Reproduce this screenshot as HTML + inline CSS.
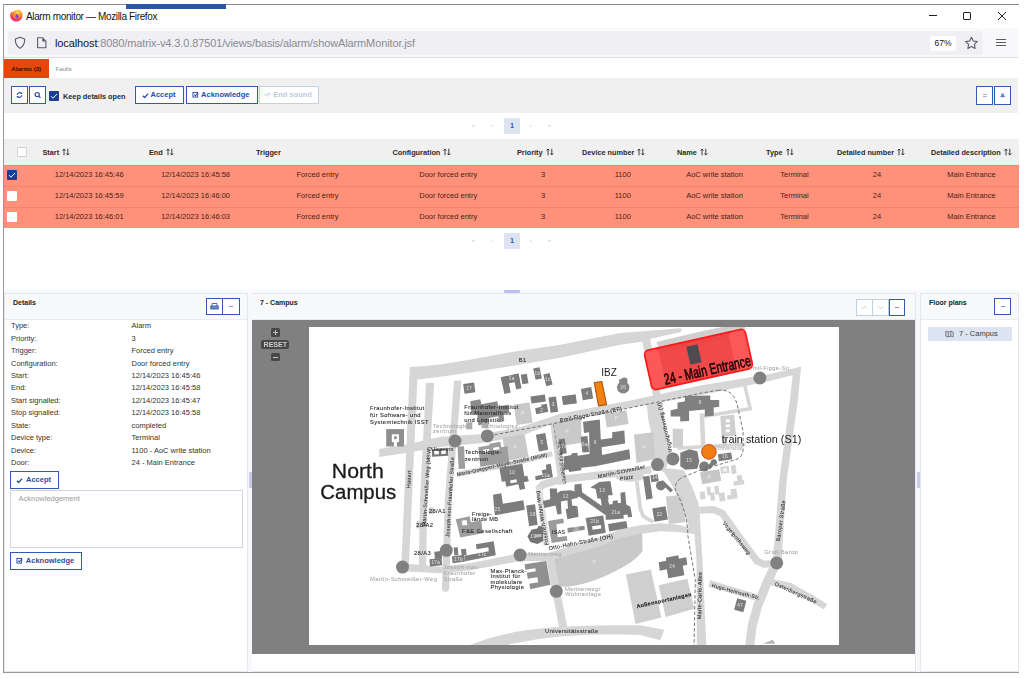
<!DOCTYPE html>
<html><head><meta charset="utf-8"><title>Alarm monitor</title>
<style>
*{box-sizing:border-box;margin:0;padding:0}
html,body{width:1024px;height:679px;overflow:hidden;background:#fff;font-family:"Liberation Sans",sans-serif;}
.abs{position:absolute}
#win{position:absolute;left:3px;top:4px;width:1016px;height:669px;border-top:1px solid #8a8a8a;border-left:1px solid #9a9a9a;border-bottom:1px solid #9a9a9a;background:#fff}
#title{position:absolute;left:26px;top:11px;font-size:10px;color:#15141a;letter-spacing:-0.36px;white-space:nowrap}
#bluebar{position:absolute;left:126px;top:4px;width:100px;height:5px;background:#2b56a8}
#nav{position:absolute;left:4px;top:28px;width:1014px;height:30px;background:#f9f9fb;border-bottom:1px solid #dcdce0}
#urlf{position:absolute;left:8px;top:31px;width:975px;height:24px;background:#f0f0f4;border-radius:4px}
#url{position:absolute;left:55px;top:37px;font-size:11px;color:#8a8a92;white-space:nowrap;letter-spacing:-0.12px}
#url b{font-weight:normal;color:#15141a}
#zoom{position:absolute;left:930px;top:36px;width:26px;height:15px;background:#fff;border-radius:2px;font-size:8.500px;color:#15141a;text-align:center;line-height:15px}
.tab1{position:absolute;left:4px;top:59px;width:44.500px;height:19.700px;background:#e8450a;border-bottom:1px solid #c93a08;color:#33100a;font-size:6.100px;font-weight:bold;text-align:center;line-height:20.500px}
.tab2{position:absolute;left:55.500px;top:59px;height:20px;color:#8a8a8a;font-size:6px;line-height:20.500px}
#tb{position:absolute;left:4px;top:78px;width:1014px;height:35px;background:#f0f0f0}
.btn{position:absolute;border:1px solid #2f5bb0;background:#fff;color:#2a4d9b;font-weight:bold;font-size:7.5px;white-space:nowrap;text-align:center}
.t{position:absolute;white-space:nowrap}

.pg{position:absolute;left:504px;width:16px;height:16px;background:#dce3f1;color:#2a4d9b;font-size:6.5px;font-weight:bold;text-align:center;line-height:16px}
.pa{position:absolute;font-size:6px;color:#d8d8d8;width:10px;text-align:center;font-weight:bold}
#th{position:absolute;left:4px;top:139px;width:1015px;height:26px;background:#f0f0f0}
.row{position:absolute;left:4px;width:1015px;height:21.300px;background:#ff917a;border-top:1px solid #f5836c}
.h{position:absolute;top:148px;font-size:7.300px;font-weight:bold;color:#2a2a2a;white-space:nowrap}
.c{position:absolute;font-size:7.500px;color:#4a1f18;white-space:nowrap;transform:translateX(-50%);line-height:10px}
.cb{position:absolute;width:10px;height:10px;background:#fff;border-radius:1px}

.panel{position:absolute;border:1px solid #e4e7ef;background:#fff}
.ph{position:absolute;left:0;top:0;right:0;height:26px;background:#f8f9fb;border-bottom:1px solid #e9ebf1}
.pt{position:absolute;font-size:7px;font-weight:bold;color:#222;white-space:nowrap}
.d{position:absolute;font-size:7.500px;color:#333;white-space:nowrap;line-height:10px}
</style></head><body>
<div id="win"></div>
<div id="bluebar"></div>
<div id="title">Alarm monitor — Mozilla Firefox</div>
<div id="nav"></div><div id="urlf"></div>
<div id="url"><b>localhost</b>:8080/matrix-v4.3.0.87501/views/basis/alarm/showAlarmMonitor.jsf</div>
<div id="zoom">67%</div>
<div class="tab1">Alarms (3)</div><div class="tab2">Faults</div>
<div id="tb"></div>

<div class="btn" style="left:11px;top:86px;width:17px;height:18px"><svg width="15" height="16" viewBox="0 0 15 16" style="position:absolute;left:0;top:0"><path d="M5.300 7.700a2.300 2.300 0 0 1 4-1.300M9.700 8.300a2.300 2.300 0 0 1-4 1.300" fill="none" stroke="#2a4d9b" stroke-width="1.200"/><path d="M10.200 5v2h-2zM4.800 11v-2h2z" fill="#2a4d9b"/></svg></div>
<div class="btn" style="left:29px;top:86px;width:17px;height:18px"><svg width="15" height="16" viewBox="0 0 15 16" style="position:absolute;left:0;top:0"><circle cx="7.2" cy="7.6" r="2.1" fill="none" stroke="#2a4d9b" stroke-width="1.2"/><path d="M8.7 9.1l1.7 1.7" stroke="#2a4d9b" stroke-width="1.3"/></svg></div>
<div class="abs" style="left:49px;top:91px;width:10px;height:10px;background:#1a3e98;border-radius:1px"><svg width="10" height="10" viewBox="0 0 10 10" style="position:absolute;left:0;top:0"><path d="M2 5.2l2 2l4-4.2" fill="none" stroke="#fff" stroke-width="1"/></svg></div>
<div class="t" style="left:63px;top:92px;font-size:7.3px;font-weight:bold;color:#2a2a2a">Keep details open</div>
<div class="btn" style="left:135px;top:86px;width:49px;height:18px;line-height:16px;padding-left:7px"><svg width="7" height="7" viewBox="0 0 8 8" style="position:absolute;left:6px;top:4.500px"><path d="M1 4.2l2 2l4-4.4" fill="none" stroke="#2a4d9b" stroke-width="1.5"/></svg>Accept</div>
<div class="btn" style="left:186px;top:86px;width:71.500px;height:18px;line-height:16px;padding-left:7px"><svg width="7.500" height="7.500" viewBox="0 0 8 8" style="position:absolute;left:4.500px;top:4px"><rect x="1" y="1.5" width="5" height="5" fill="none" stroke="#2a4d9b" stroke-width="1"/><path d="M2.3 3.8l1.3 1.3l3-3.4" fill="none" stroke="#2a4d9b" stroke-width="1.1"/></svg>Acknowledge</div>
<div class="btn" style="left:259px;top:86px;width:60px;height:18px;line-height:16px;padding-left:7px;border-color:#c5d0e6;color:#c0cae0"><span style="position:absolute;left:4px;top:0;font-size:4.500px">◁×</span>End sound</div>
<div class="btn" style="left:976px;top:86px;width:17px;height:19px"><div class="abs" style="left:6px;top:7px;width:4px;height:1px;background:#9fb3dc"></div><div class="abs" style="left:6px;top:9px;width:4px;height:1px;background:#9fb3dc"></div></div>
<div class="btn" style="left:994px;top:86px;width:17px;height:19px"><svg width="15" height="17" viewBox="0 0 15 17" style="position:absolute;left:0;top:0"><path d="M6 9.3v-1.5a1.6 1.6 0 0 1 3.2 0v1.5z" fill="#6f8fd0"/><path d="M5.4 9.6h4.4" stroke="#2a4d9b" stroke-width="0.8"/></svg></div>

<svg class="abs" style="left:9px;top:9px" width="15" height="14" viewBox="0 0 15 14"><defs><radialGradient id="fx" cx="0.6" cy="0.25" r="0.85"><stop offset="0" stop-color="#ffe14a"/><stop offset="0.35" stop-color="#ff9a1f"/><stop offset="0.7" stop-color="#ff3d4f"/><stop offset="1" stop-color="#e31587"/></radialGradient></defs><path d="M7.3 1.2C8.6.6 9.6 1 10.5.4c.3 1 1.4 1.5 2.2 2.9c.9 1.6 1 3.600.4 5.100c-.9 2.400-3.200 4.100-5.800 4.100c-3.400 0-6.100-2.700-6.100-6c0-1.600.6-3.100 1.500-4c.1.500.3.900.6 1.200c.9-1.700 2.200-2.200 4-2.500z" fill="url(#fx)"/><circle cx="7" cy="7.200" r="2.500" fill="#7b3fe0"/><path d="M5 5.500c1.200-.8 2.800-.3 3.300.6c-1.400-.3-2.300.6-2 1.600c.3.800 1.200 1 2 .6c-.6 1-2.200 1.200-3.200.3c-.9-.8-.9-2.200-.1-3.100z" fill="#ff9a1f"/></svg>
<svg class="abs" style="left:13px;top:36px" width="14" height="14" viewBox="0 0 14 14"><path d="M7 1.300l4.700 1.700c.1 4.200-1.300 7.300-4.700 9.400C3.600 10.300 2.200 7.200 2.300 3z" fill="none" stroke="#5b5b66" stroke-width="1.100" stroke-linejoin="round"/></svg>
<svg class="abs" style="left:36px;top:36px" width="12" height="14" viewBox="0 0 12 14"><path d="M1.600 1.800h5l3.300 3.300v6.700h-8.300z" fill="none" stroke="#5b5b66" stroke-width="1.100" stroke-linejoin="round"/><path d="M6.300 1.800v3.600h3.600z" fill="#5b5b66"/></svg>
<div class="abs" style="left:929px;top:15px;width:8px;height:1px;background:#222"></div>
<div class="abs" style="left:963px;top:12px;width:8px;height:8px;border:1px solid #222;border-radius:1px"></div>
<svg class="abs" style="left:997px;top:11px" width="10" height="10" viewBox="0 0 10 10"><path d="M1 1l8 8M9 1l-8 8" stroke="#222" stroke-width="1"/></svg>
<svg class="abs" style="left:964px;top:36px" width="15" height="14" viewBox="0 0 15 14"><path d="M7.500 1.300l1.800 3.700l4 .6l-2.900 2.800l.7 4l-3.600-1.900l-3.600 1.900l.7-4l-2.900-2.800l4-.6z" fill="none" stroke="#5b5b66" stroke-width="1.100" stroke-linejoin="round"/></svg>
<div class="abs" style="left:996px;top:39px;width:10px;height:1px;background:#5b5b66"></div>
<div class="abs" style="left:996px;top:42px;width:10px;height:1px;background:#5b5b66"></div>
<div class="abs" style="left:996px;top:45px;width:10px;height:1px;background:#5b5b66"></div>
<!--TOOLBAR-->
<div class="pg" style="top:118px">1</div><div class="pa" style="left:468.5px;top:122px">«</div><div class="pa" style="left:487.3px;top:122px">‹</div><div class="pa" style="left:525.5px;top:122px">›</div><div class="pa" style="left:544.3px;top:122px">»</div><div class="pg" style="top:233px">1</div><div class="pa" style="left:468.5px;top:237px">«</div><div class="pa" style="left:487.3px;top:237px">‹</div><div class="pa" style="left:525.5px;top:237px">›</div><div class="pa" style="left:544.3px;top:237px">»</div><div id="th"></div><div class="cb" style="left:17px;top:147px;border:1px solid #d4d4d4"></div>
<div class="h" style="left:42.5px">Start<svg width="8" height="8" viewBox="0 0 8 8" style="margin-left:3px;vertical-align:-1px"><path d="M2 7.300V1M.6 2.500L2 1l1.400 1.500M5.800.7v6.300M4.400 5.500l1.400 1.500l1.400-1.500" fill="none" stroke="#2a2a2a" stroke-width="0.900"/></svg></div><div class="h" style="left:149px">End<svg width="8" height="8" viewBox="0 0 8 8" style="margin-left:3px;vertical-align:-1px"><path d="M2 7.300V1M.6 2.500L2 1l1.400 1.500M5.800.7v6.300M4.400 5.500l1.400 1.500l1.400-1.500" fill="none" stroke="#2a2a2a" stroke-width="0.900"/></svg></div><div class="h" style="left:256px">Trigger</div><div class="h" style="left:392.5px">Configuration<svg width="8" height="8" viewBox="0 0 8 8" style="margin-left:3px;vertical-align:-1px"><path d="M2 7.300V1M.6 2.500L2 1l1.400 1.500M5.800.7v6.300M4.400 5.500l1.400 1.500l1.400-1.500" fill="none" stroke="#2a2a2a" stroke-width="0.900"/></svg></div><div class="h" style="left:517px">Priority<svg width="8" height="8" viewBox="0 0 8 8" style="margin-left:3px;vertical-align:-1px"><path d="M2 7.300V1M.6 2.500L2 1l1.400 1.500M5.800.7v6.300M4.400 5.500l1.400 1.500l1.400-1.500" fill="none" stroke="#2a2a2a" stroke-width="0.900"/></svg></div><div class="h" style="left:582px">Device number<svg width="8" height="8" viewBox="0 0 8 8" style="margin-left:3px;vertical-align:-1px"><path d="M2 7.300V1M.6 2.500L2 1l1.400 1.500M5.800.7v6.300M4.400 5.500l1.400 1.500l1.400-1.500" fill="none" stroke="#2a2a2a" stroke-width="0.900"/></svg></div><div class="h" style="left:677px">Name<svg width="8" height="8" viewBox="0 0 8 8" style="margin-left:3px;vertical-align:-1px"><path d="M2 7.300V1M.6 2.500L2 1l1.400 1.500M5.800.7v6.300M4.400 5.500l1.400 1.500l1.400-1.500" fill="none" stroke="#2a2a2a" stroke-width="0.900"/></svg></div><div class="h" style="left:766px">Type<svg width="8" height="8" viewBox="0 0 8 8" style="margin-left:3px;vertical-align:-1px"><path d="M2 7.300V1M.6 2.500L2 1l1.400 1.500M5.800.7v6.300M4.400 5.500l1.400 1.500l1.400-1.500" fill="none" stroke="#2a2a2a" stroke-width="0.900"/></svg></div><div class="h" style="left:837px">Detailed number<svg width="8" height="8" viewBox="0 0 8 8" style="margin-left:3px;vertical-align:-1px"><path d="M2 7.300V1M.6 2.500L2 1l1.400 1.500M5.800.7v6.300M4.400 5.500l1.400 1.500l1.400-1.500" fill="none" stroke="#2a2a2a" stroke-width="0.900"/></svg></div><div class="h" style="left:931px">Detailed description<svg width="8" height="8" viewBox="0 0 8 8" style="margin-left:3px;vertical-align:-1px"><path d="M2 7.300V1M.6 2.500L2 1l1.400 1.500M5.800.7v6.300M4.400 5.500l1.400 1.500l1.400-1.500" fill="none" stroke="#2a2a2a" stroke-width="0.900"/></svg></div>
<div class="row" style="top:164.5px"></div><div class="cb" style="left:7px;top:170.0px;background:#1a3e98"><svg width="10" height="10" viewBox="0 0 10 10" style="position:absolute;left:0;top:0"><path d="M2 5.200l2 2l4-4.200" fill="none" stroke="#fff" stroke-width="1"/></svg></div><div class="c" style="left:89.2px;top:170.0px">12/14/2023 16:45:46</div><div class="c" style="left:195.6px;top:170.0px">12/14/2023 16:45:58</div><div class="c" style="left:317.5px;top:170.0px">Forced entry</div><div class="c" style="left:448.2px;top:170.0px">Door forced entry</div><div class="c" style="left:543px;top:170.0px">3</div><div class="c" style="left:622.8px;top:170.0px">1100</div><div class="c" style="left:714.5px;top:170.0px">AoC write station</div><div class="c" style="left:794.5px;top:170.0px">Terminal</div><div class="c" style="left:877px;top:170.0px">24</div><div class="c" style="left:971.5px;top:170.0px">Main Entrance</div>
<div class="row" style="top:185.6px"></div><div class="cb" style="left:7px;top:191.1px"></div><div class="c" style="left:89.2px;top:191.1px">12/14/2023 16:45:59</div><div class="c" style="left:195.6px;top:191.1px">12/14/2023 16:46:00</div><div class="c" style="left:317.5px;top:191.1px">Forced entry</div><div class="c" style="left:448.2px;top:191.1px">Door forced entry</div><div class="c" style="left:543px;top:191.1px">3</div><div class="c" style="left:622.8px;top:191.1px">1100</div><div class="c" style="left:714.5px;top:191.1px">AoC write station</div><div class="c" style="left:794.5px;top:191.1px">Terminal</div><div class="c" style="left:877px;top:191.1px">24</div><div class="c" style="left:971.5px;top:191.1px">Main Entrance</div>
<div class="row" style="top:206.7px"></div><div class="cb" style="left:7px;top:212.2px"></div><div class="c" style="left:89.2px;top:212.2px">12/14/2023 16:46:01</div><div class="c" style="left:195.6px;top:212.2px">12/14/2023 16:46:03</div><div class="c" style="left:317.5px;top:212.2px">Forced entry</div><div class="c" style="left:448.2px;top:212.2px">Door forced entry</div><div class="c" style="left:543px;top:212.2px">3</div><div class="c" style="left:622.8px;top:212.2px">1100</div><div class="c" style="left:714.5px;top:212.2px">AoC write station</div><div class="c" style="left:794.5px;top:212.2px">Terminal</div><div class="c" style="left:877px;top:212.2px">24</div><div class="c" style="left:971.5px;top:212.2px">Main Entrance</div>
<!--TABLE-->

<div class="panel" style="left:4px;top:293px;width:244px;height:379px"><div class="ph"></div></div>
<div class="panel" style="left:251px;top:293px;width:665px;height:379px"><div class="ph"></div></div>
<div class="panel" style="left:920px;top:293px;width:99px;height:379px"><div class="ph"></div></div>
<div class="pt" style="left:13px;top:299px">Details</div>
<div class="pt" style="left:260px;top:299px">7 - Campus</div>
<div class="pt" style="left:929px;top:299px">Floor plans</div>
<div class="btn" style="left:206px;top:298px;width:17px;height:17px"><svg width="15" height="15" viewBox="0 0 15 15" style="position:absolute;left:0;top:0"><path d="M5 7V4.500h5V7" fill="#fff" stroke="#2a4d9b" stroke-width="0.800"/><rect x="3.800" y="7" width="7.400" height="3" fill="#6f8fd0" stroke="#2a4d9b" stroke-width="0.800"/></svg></div>
<div class="btn" style="left:222px;top:298px;width:18px;height:17px"><div class="abs" style="left:6px;top:7px;width:4px;height:1px;background:#7d95cc"></div></div>
<div class="btn" style="left:856px;top:299px;width:17px;height:17px;border-color:#c3cde6"><svg width="15" height="15" viewBox="0 0 15 15" style="position:absolute;left:0;top:0"><path d="M5 8.800l2.500-2.500l2.500 2.500" fill="none" stroke="#c3cde6" stroke-width="1"/></svg></div>
<div class="btn" style="left:872px;top:299px;width:17px;height:17px;border-color:#c3cde6"><svg width="15" height="15" viewBox="0 0 15 15" style="position:absolute;left:0;top:0"><path d="M5 6.300l2.500 2.500l2.500-2.500" fill="none" stroke="#c3cde6" stroke-width="1"/></svg></div>
<div class="btn" style="left:889px;top:299px;width:16px;height:17px"><div class="abs" style="left:5px;top:7px;width:4px;height:1px;background:#7d95cc"></div></div>
<div class="btn" style="left:994px;top:298px;width:17px;height:17px"><div class="abs" style="left:6px;top:7px;width:4px;height:1px;background:#7d95cc"></div></div>
<div class="abs" style="left:928px;top:327px;width:84px;height:14px;background:#dce3f1"></div>
<svg class="abs" style="left:945px;top:330px" width="9" height="8" viewBox="0 0 9 8"><path d="M.8 1.300l2.400.8l2.600-.8l2.400.8v4.800l-2.400-.8l-2.600.8l-2.400-.8zM3.200 2.100v4.800M5.800 1.300v4.800" fill="none" stroke="#555" stroke-width="0.700"/></svg>
<div class="d" style="left:959px;top:329px;color:#444">7 - Campus</div>
<div class="d" style="left:11px;top:321.2px">Type:</div><div class="d" style="left:131.5px;top:321.2px">Alarm</div>
<div class="d" style="left:11px;top:333.6px">Priority:</div><div class="d" style="left:131.5px;top:333.6px">3</div>
<div class="d" style="left:11px;top:346.1px">Trigger:</div><div class="d" style="left:131.5px;top:346.1px">Forced entry</div>
<div class="d" style="left:11px;top:358.5px">Configuration:</div><div class="d" style="left:131.5px;top:358.5px">Door forced entry</div>
<div class="d" style="left:11px;top:371.0px">Start:</div><div class="d" style="left:131.5px;top:371.0px">12/14/2023 16:45:46</div>
<div class="d" style="left:11px;top:383.4px">End:</div><div class="d" style="left:131.5px;top:383.4px">12/14/2023 16:45:58</div>
<div class="d" style="left:11px;top:395.9px">Start signalled:</div><div class="d" style="left:131.5px;top:395.9px">12/14/2023 16:45:47</div>
<div class="d" style="left:11px;top:408.3px">Stop signalled:</div><div class="d" style="left:131.5px;top:408.3px">12/14/2023 16:45:58</div>
<div class="d" style="left:11px;top:420.8px">State:</div><div class="d" style="left:131.5px;top:420.8px">completed</div>
<div class="d" style="left:11px;top:433.2px">Device type:</div><div class="d" style="left:131.5px;top:433.2px">Terminal</div>
<div class="d" style="left:11px;top:445.7px">Device:</div><div class="d" style="left:131.5px;top:445.7px">1100 - AoC write station</div>
<div class="d" style="left:11px;top:458.1px">Door:</div><div class="d" style="left:131.5px;top:458.1px">24 - Main Entrance</div>

<div class="btn" style="left:10px;top:471px;width:49px;height:18px;line-height:16px;padding-left:8px"><svg width="7" height="7" viewBox="0 0 8 8" style="position:absolute;left:5px;top:4.500px"><path d="M1 4.200l2 2l4-4.400" fill="none" stroke="#2a4d9b" stroke-width="1.500"/></svg>Accept</div>
<div class="abs" style="left:10px;top:490px;width:233px;height:58px;border:1px solid #d0d5e2;background:#fff"></div>
<div class="d" style="left:18.500px;top:494px;color:#9a9a9a">Acknowledgement</div>
<div class="btn" style="left:10px;top:552px;width:72px;height:17.500px;line-height:15.500px;padding-left:8px"><svg width="7.500" height="7.500" viewBox="0 0 8 8" style="position:absolute;left:4.500px;top:4px"><rect x="1" y="1.500" width="5" height="5" fill="none" stroke="#2a4d9b" stroke-width="1"/><path d="M2.300 3.800l1.300 1.300l3-3.400" fill="none" stroke="#2a4d9b" stroke-width="1.100"/></svg>Acknowledge</div>
<div class="abs" style="left:252px;top:320px;width:662.500px;height:334px;background:#808080"></div>
<div class="abs" style="left:308.700px;top:326.700px;width:530.500px;height:318.300px;background:#fff;overflow:hidden" id="map">
<!--MAP-->
<svg width="530.5" height="318.3" viewBox="308.7 326.7 530.5 318.3" style="position:absolute;left:0;top:0" font-family="Liberation Sans, sans-serif">
<g style="filter:blur(0.35px)">
<polygon points="409.5,366.8 425.0,365.8 440.0,364.3 475.0,358.5 510.0,352.0 560.0,344.4 620.0,332.8 680.0,328.0 681.5,330.0 680.0,332.0 651.3,338.3 641.9,341.4 620.0,344.5 560.0,357.4 510.0,366.0 475.0,371.5 440.0,376.5 417.6,379.3" fill="#d6d6d6"/>
<polygon points="656.0,341.8 700.0,331.3 745.0,322.0 745.0,334.0 660.0,352.0" fill="#cfcfcf"/>
<polygon points="409.5,367.0 417.6,367.0 408.6,566.0 401.0,566.0" fill="#d6d6d6"/>
<polygon points="425.7,382.5 433.8,382.5 427.0,500.0 425.8,568.0 418.5,568.0 419.7,500.0" fill="#d6d6d6"/>
<polygon points="453.8,380.5 461.0,380.5 451.5,500.0 448.9,588.0 441.6,588.0 444.5,500.0" fill="#d6d6d6"/>
<circle cx="445.2" cy="588.0" r="3.6" fill="#d6d6d6"/>
<polygon points="641.9,340.0 649.7,338.0 651.5,347.0 661.2,398.0 653.6,400.5 643.5,349.0" fill="#d6d6d6"/>
<polygon points="379.0,448.6 410.0,443.5 440.0,436.5 480.0,434.0 520.0,427.0 560.0,413.5 630.0,400.3 700.0,385.3 770.0,373.7 800.5,366.5 796.0,374.0 770.0,380.5 700.0,394.9 630.0,407.2 560.0,420.5 520.0,436.0 480.0,443.0 440.0,446.7 410.0,452.0 379.0,456.7" fill="#d6d6d6"/>
<polygon points="793.0,369.0 800.8,366.5 797.6,400.0 786.4,480.0 781.0,562.0 772.5,562.0 779.0,480.0 789.6,400.0" fill="#d6d6d6"/>
<path d="M457.0 474.0 L505.0 465.0 L552.0 453.5" fill="none" stroke="#d6d6d6" stroke-width="5.0" stroke-linecap="butt" stroke-linejoin="round"/>
<polygon points="550.0,424.0 556.7,423.0 565.6,483.0 558.5,485.0" fill="#d6d6d6"/>
<path d="M538.0 489.0 L543.0 484.0 L560.0 479.3 L598.0 475.0 L651.0 469.5" fill="none" stroke="#d6d6d6" stroke-width="7.5" stroke-linecap="butt" stroke-linejoin="round"/>
<path d="M538.3 486.0 L546.5 545.0" fill="none" stroke="#dedede" stroke-width="6.5" stroke-linecap="butt" stroke-linejoin="round"/>
<ellipse cx="630" cy="476.5" rx="14.5" ry="5" fill="#d6d6d6"/>
<polygon points="646.4,403.0 662.0,400.0 664.0,420.0 667.6,445.0 672.0,452.0 665.0,470.0 652.0,470.0 654.0,445.0 648.0,420.0" fill="#d6d6d6"/>
<polygon points="652.0,466.0 683.6,470.0 691.6,486.0 698.2,503.0 699.5,515.0 702.2,560.0 706.0,645.0 696.5,645.0 696.2,560.0 694.2,533.6 689.0,528.0 682.3,509.8 677.0,496.5 673.0,487.2 663.7,472.0" fill="#d6d6d6"/>
<rect x="667.0" y="495.2" width="16.6" height="27.8" fill="#cecece" transform="rotate(-6.0 675.3 509.1)"/>
<polygon points="402.0,563.0 440.0,566.5 470.0,563.0 520.0,552.7 548.0,552.5 600.0,537.0 620.0,529.0 639.9,525.0 659.8,523.0 675.7,524.3 694.2,528.3 694.2,533.6 677.0,531.6 659.8,531.0 639.9,533.6 620.0,537.6 600.0,547.0 550.0,561.0 520.0,560.8 470.0,570.0 440.0,573.0 402.0,571.0" fill="#d6d6d6"/>
<path d="M553.5 559 L600 546 L620 537.5 L641.9 533 L642.2 550.8 C636 560 625 566 614.7 571 C598 580 580 585.500 564.8 586.5 L557 586.5 Z" fill="#c9c9c9"/>
<polygon points="546.0,558.0 553.5,556.0 560.0,591.0 566.8,626.0 559.0,628.0 552.0,591.0" fill="#d6d6d6"/>
<path d="M469 645 C490 636 520 629.5 545 627.7 C570 625.5 600 625 640 625 L664 629.5 L660 640 L640 634.7 C600 633.5 570 634.5 545 638 C530 640 515 643 505 645 Z" fill="#d6d6d6"/>
<path d="M699.0 510.0 L712.8 509.2 L722.0 513.0 L740.0 538.0 L757.0 561.0 L764.0 564.0 L776.0 563.0" fill="none" stroke="#d6d6d6" stroke-width="7.0" stroke-linecap="butt" stroke-linejoin="round"/>
<path d="M776.0 563.0 L767.7 580.0 L757.6 605.0 L752.0 625.0 L749.0 648.0" fill="none" stroke="#d6d6d6" stroke-width="9.0" stroke-linecap="butt" stroke-linejoin="round"/>
<path d="M767.0 581.0 L790.0 586.0 L808.0 596.0 L825.3 606.4" fill="none" stroke="#d6d6d6" stroke-width="6.5" stroke-linecap="butt" stroke-linejoin="round"/>
<path d="M709.0 583.0 L759.0 598.0" fill="none" stroke="#d6d6d6" stroke-width="6.5" stroke-linecap="butt" stroke-linejoin="round"/>
<path d="M744.2 384.0 L750.0 408.5 L701.0 416.5" fill="none" stroke="#d6d6d6" stroke-width="3.5" stroke-linecap="butt" stroke-linejoin="round"/>
<path d="M701.5 413.0 L703.0 447.0" fill="none" stroke="#d6d6d6" stroke-width="4.5" stroke-linecap="butt" stroke-linejoin="round"/>
<path d="M677.0 448.0 L745.0 444.0" fill="none" stroke="#d6d6d6" stroke-width="3.5" stroke-linecap="butt" stroke-linejoin="round"/>
<path d="M722.0 416.0 L724.0 445.0" fill="none" stroke="#cfcfcf" stroke-width="4.0" stroke-linecap="butt" stroke-linejoin="round"/>
<path d="M636.5 481.0 L640.0 508.0 L643.0 516.0 L653.0 521.5" fill="none" stroke="#d6d6d6" stroke-width="3.8" stroke-linecap="butt" stroke-linejoin="round"/>
<rect x="514.8" y="403.1" width="16.0" height="20.5" fill="#c9c9c9" transform="rotate(-8.0 522.8 413.3)"/>
<rect x="504.0" y="435.4" width="22.5" height="23.5" fill="#c9c9c9" transform="rotate(-10.0 515.3 447.2)"/>
<polygon points="553.5,421.5 581.0,416.5 581.0,442.4 560.0,446.0 553.5,446.0" fill="#c9c9c9"/>
<rect x="605.3" y="411.5" width="22.0" height="14.0" fill="#c9c9c9" transform="rotate(-9.0 616.3 418.5)"/>
<polygon points="633.7,434.3 653.2,431.9 654.8,458.6 636.2,462.7" fill="#cbcbcb"/>
<polygon points="699.7,472.3 718.8,469.0 721.0,480.4 701.9,484.0" fill="#c6c6c6"/>
<rect x="672.4" y="428.4" width="10.3" height="19.1" fill="#cfcfcf" transform="rotate(0.0 677.5 437.9)"/>
<polygon points="625.6,574.3 650.5,569.3 661.0,617.3 635.2,623.8" fill="#cfcfcf"/>
<polygon points="658.4,585.0 687.0,578.4 694.0,608.5 665.3,616.7" fill="#cfcfcf"/>
<rect x="385.9" y="428.8" width="17.8" height="17.4" fill="#8e8e8e" transform="rotate(0.0 394.8 437.5)"/>
<rect x="391.5" y="434.0" width="7.2" height="7.8" fill="#fff" transform="rotate(0.0 395.1 437.9)"/>
<rect x="393.8" y="436.0" width="2.7" height="2.8" fill="#8e8e8e" transform="rotate(0.0 395.1 437.4)"/>
<rect x="393.6" y="441.5" width="3.0" height="4.9" fill="#fff" transform="rotate(0.0 395.1 443.9)"/>
<rect x="463.5" y="382.8" width="11.0" height="10.0" fill="#7c7c7c" transform="rotate(-8.0 469.0 387.8)"/>
<g transform="rotate(-12 511 383)">
<rect x="502.0" y="375.0" width="18.0" height="7.5" fill="#7c7c7c" transform="rotate(0.0 511.0 378.8)"/>
<rect x="502.0" y="375.0" width="6.5" height="17.0" fill="#7c7c7c" transform="rotate(0.0 505.2 383.5)"/>
<rect x="514.5" y="375.0" width="5.5" height="15.0" fill="#7c7c7c" transform="rotate(0.0 517.2 382.5)"/>
</g>
<rect x="521.2" y="373.9" width="6.2" height="9.6" fill="#7c7c7c" transform="rotate(-10.0 524.3 378.7)"/>
<rect x="534.0" y="367.4" width="6.5" height="11.5" fill="#7c7c7c" transform="rotate(-12.0 537.2 373.2)"/>
<rect x="544.4" y="373.3" width="6.5" height="12.0" fill="#7c7c7c" transform="rotate(-14.0 547.6 379.3)"/>
<rect x="530.6" y="395.2" width="14.5" height="7.0" fill="#7c7c7c" transform="rotate(-8.0 537.9 398.7)"/>
<polygon points="534.8,408.0 541.0,406.5 541.0,404.5 546.5,403.5 548.0,411.5 536.0,414.0" fill="#7c7c7c"/>
<rect x="549.2" y="396.6" width="7.6" height="15.5" fill="#7c7c7c" transform="rotate(-8.0 553.0 404.3)"/>
<rect x="562.5" y="395.1" width="13.5" height="8.8" fill="#7c7c7c" transform="rotate(-8.0 569.2 399.5)"/>
<rect x="562.1" y="395.1" width="13.5" height="8.5" fill="#7c7c7c" transform="rotate(-8.0 568.9 399.3)"/>
<rect x="581.5" y="387.6" width="10.5" height="11.5" fill="#7c7c7c" transform="rotate(-10.0 586.7 393.4)"/>
<circle cx="622.9" cy="387.0" r="6.2" fill="#858585"/>
<circle cx="624.0" cy="380.5" r="3.3" fill="#858585"/>
<rect x="619.0" y="378.5" width="7.0" height="5.5" fill="#858585" transform="rotate(-10.0 622.5 381.2)"/>
<polygon points="470.0,401.0 480.0,399.0 481.0,404.0 497.0,401.0 498.0,406.0 508.0,404.5 509.0,412.0 503.0,413.0 504.0,421.0 499.0,422.0 498.0,416.0 488.0,418.0 489.0,424.0 478.0,425.0 477.0,414.0 471.0,415.0" fill="#8a8a8a"/>
<rect x="466.0" y="422.0" width="6.0" height="7.0" fill="#aaa" transform="rotate(0.0 469.0 425.5)"/>
<rect x="482.0" y="421.0" width="6.0" height="7.0" fill="#aaa" transform="rotate(0.0 485.0 424.5)"/>
<polygon points="478.0,447.0 489.0,445.0 489.0,443.5 500.0,441.5 501.0,447.0 507.0,446.0 509.0,462.0 480.0,466.5" fill="#9e9e9e"/>
<rect x="483.0" y="449.0" width="6.0" height="2.5" fill="#fff" transform="rotate(-10.0 486.0 450.2)"/>
<rect x="493.0" y="447.0" width="6.0" height="2.5" fill="#fff" transform="rotate(-10.0 496.0 448.2)"/>
<rect x="457.8" y="446.1" width="6.5" height="22.5" fill="#9e9e9e" transform="rotate(-3.0 461.0 457.3)"/>
<rect x="431.6" y="448.6" width="16.2" height="7.4" fill="#777" transform="rotate(-3.0 439.7 452.3)"/>
<rect x="434.0" y="450.5" width="4.5" height="3.5" fill="#fff" transform="rotate(-3.0 436.2 452.2)"/>
<rect x="441.0" y="450.0" width="4.5" height="3.5" fill="#fff" transform="rotate(-3.0 443.2 451.8)"/>
<rect x="537.0" y="433.4" width="9.5" height="17.0" fill="#7c7c7c" transform="rotate(-10.0 541.7 441.9)"/>
<rect x="559.5" y="438.5" width="6.0" height="15.0" fill="#7c7c7c" transform="rotate(-8.0 562.5 446.0)"/>
<polygon points="499.0,467.5 522.0,463.5 524.0,476.0 527.0,475.5 528.5,481.0 523.5,482.0 525.0,488.5 519.5,489.7 518.0,484.0 506.0,486.5 505.0,481.0 501.5,481.5" fill="#7c7c7c"/>
<rect x="510.0" y="479.5" width="6.5" height="3.0" fill="#fff" transform="rotate(-10.0 513.2 481.0)"/>
<polygon points="534.8,476.0 542.0,474.5 541.5,470.0 546.0,469.0 545.5,464.5 550.5,463.5 552.6,477.0 535.5,480.0" fill="#7c7c7c"/>
<polygon points="492.7,494.5 501.0,493.0 502.6,503.5 523.0,500.0 524.5,509.5 494.5,515.0" fill="#7c7c7c"/>
<polygon points="525.9,505.3 534.7,503.9 537.3,524.4 528.8,525.9" fill="#7c7c7c"/>
<polygon points="527.1,536.0 531.2,529.5 537.1,528.3 538.2,525.4 542.4,526.5 543.0,540.7 537.1,543.6 530.0,541.8" fill="#747474"/>
<polygon points="534.7,534.2 541.2,533.6 541.4,536.5 534.9,537.1" fill="#bdbdbd"/>
<polygon points="547.7,520.6 563.0,518.3 563.6,522.8 556.1,523.9 557.3,536.9 566.5,535.7 567.1,540.1 551.4,542.7" fill="#9a9a9a"/>
<polygon points="567.1,527.7 584.2,525.4 584.5,529.5 567.5,532.4" fill="#8c8c8c"/>
<polygon points="585.4,517.7 603.0,515.3 605.4,532.4 588.3,535.4" fill="#7c7c7c"/>
<polygon points="591.8,525.9 600.7,524.8 601.0,528.3 592.2,529.5" fill="#fff"/>
<polygon points="582.7,421.5 599.5,419.2 600.5,439.2 611.9,437.6 611.9,431.9 624.0,430.3 624.8,443.2 601.3,447.0 601.8,454.6 628.9,448.9 630.0,458.6 594.8,465.9 581.0,467.5 581.0,470.0 569.0,471.6 568.0,469.2 564.0,469.6 563.2,456.2 571.3,454.6 571.3,453.0 577.0,452.5 577.5,455.4 589.2,453.8 588.8,432.0 583.7,432.7" fill="#7c7c7c"/>
<rect x="581.2" y="436.0" width="6.8" height="16.0" fill="#7c7c7c" transform="rotate(-6.0 584.6 444.0)"/>
<polygon points="670.3,409.9 677.2,408.5 677.2,402.4 684.7,401.0 684.7,395.8 710.0,395.3 710.0,399.6 718.9,399.6 718.9,406.5 713.4,407.2 713.4,415.4 704.5,416.1 704.5,409.2 688.8,410.6 688.8,420.8 679.9,421.1 679.9,416.1 670.3,416.3" fill="#808080"/>
<polygon points="590.1,487.1 598.9,481.8 610.1,480.6 612.4,494.7 607.7,495.3 608.3,499.4 600.7,500.0 600.1,498.3 597.1,498.3 595.4,488.8" fill="#7c7c7c"/>
<polygon points="549.4,488.3 556.5,488.3 557.1,493.0 560.0,490.6 570.6,490.0 574.2,491.2 574.2,484.1 581.2,483.5 581.8,492.4 577.1,497.7 571.2,498.9 571.8,505.3 577.1,505.9 578.3,516.5 567.1,518.9 565.3,508.9 567.7,508.3 567.1,500.0 560.6,501.2 561.2,513.6 557.1,514.2 555.3,505.3 544.1,507.7 542.4,500.6 550.0,498.9" fill="#7c7c7c"/>
<path d="M579.5 493.6 L606.6 512.4" fill="none" stroke="#7c7c7c" stroke-width="5.3" stroke-linecap="butt" stroke-linejoin="round"/>
<polygon points="600.7,499.4 607.7,499.4 608.9,504.2 612.4,503.6 612.4,500.6 617.2,500.0 617.8,503.0 620.7,502.4 620.1,492.4 624.8,491.8 626.0,504.2 630.1,506.5 631.9,516.5 627.8,517.1 627.2,514.2 623.1,514.8 623.6,518.3 608.3,519.5 605.4,519.5 605.4,513.6 601.8,510.0" fill="#7c7c7c"/>
<polygon points="607.7,523.6 626.0,520.6 627.2,527.7 608.9,531.2" fill="#7c7c7c"/>
<polygon points="642.7,476.5 649.0,475.5 652.4,498.0 646.0,499.5" fill="#7c7c7c"/>
<rect x="650.5" y="474.5" width="7.5" height="7.0" fill="#7c7c7c" transform="rotate(-8.0 654.2 478.0)"/>
<circle cx="660.5" cy="485.4" r="4.8" fill="#7c7c7c"/>
<path d="M661.0 481.0 L671.5 491.0" fill="none" stroke="#7c7c7c" stroke-width="3.5" stroke-linecap="butt" stroke-linejoin="round"/>
<polygon points="680.0,452.5 689.0,449.0 697.0,451.0 699.0,461.0 697.0,468.5 685.0,469.5 680.0,466.0" fill="#7c7c7c"/>
<circle cx="703.9" cy="466.3" r="5.0" fill="#7c7c7c"/>
<circle cx="713.6" cy="461.9" r="3.0" fill="#7c7c7c"/>
<path d="M713.0 462.0 L708.0 468.0" fill="none" stroke="#7c7c7c" stroke-width="4.0" stroke-linecap="butt" stroke-linejoin="round"/>
<rect x="718.0" y="453.0" width="13.5" height="7.0" fill="#7c7c7c" transform="rotate(-8.0 724.7 456.5)"/>
<rect x="653.0" y="507.0" width="13.5" height="13.5" fill="#7c7c7c" transform="rotate(-10.0 659.7 513.7)"/>
<polygon points="658.4,562.0 666.0,560.5 665.5,557.5 678.0,555.0 678.5,558.5 686.0,557.0 687.0,564.5 682.5,565.5 684.0,575.0 668.0,578.0 666.5,569.0 659.5,570.5" fill="#7c7c7c"/>
<rect x="735.2" y="599.0" width="9.5" height="12.0" fill="#7c7c7c" transform="rotate(15.0 740.0 605.0)"/>
<polygon points="762.5,643.5 772.5,639.5 775.0,643.5" fill="#b5b5b5"/>
<polygon points="524.3,564.0 546.0,560.8 550.2,584.5 530.0,589.0 529.0,583.5 538.0,582.0 537.0,577.0 527.5,578.5 526.5,572.5 535.5,571.0 535.0,568.0 525.0,569.5" fill="#909090"/>
<polygon points="455.4,519.0 469.5,516.0 470.5,522.0 481.0,520.0 482.5,533.0 460.0,537.3" fill="#9e9e9e"/>
<rect x="461.8" y="520.0" width="4.9" height="5.0" fill="#fff" transform="rotate(-8.0 464.2 522.5)"/>
<rect x="429.4" y="558.3" width="12.2" height="7.3" fill="#7c7c7c" transform="rotate(-5.0 435.5 562.0)"/>
<rect x="434.3" y="551.0" width="7.3" height="7.5" fill="#7c7c7c" transform="rotate(-5.0 438.0 554.8)"/>
<rect x="451.9" y="555.2" width="12.5" height="7.0" fill="#7c7c7c" transform="rotate(-8.0 458.2 558.7)"/>
<rect x="453.7" y="547.0" width="4.1" height="8.0" fill="#7c7c7c" transform="rotate(-5.0 455.8 551.0)"/>
<rect x="461.0" y="548.6" width="5.0" height="6.4" fill="#7c7c7c" transform="rotate(-5.0 463.5 551.8)"/>
<polygon points="475.6,544.0 493.4,541.0 495.5,555.0 465.0,561.0 464.3,555.5 488.5,551.0 488.0,547.0 476.3,549.0" fill="#7c7c7c"/>
<rect x="428.6" y="507.3" width="4.9" height="6.5" fill="#cfcfcf" transform="rotate(0.0 431.1 510.5)"/>
<rect x="416.0" y="521.0" width="5.5" height="7.0" fill="#cfcfcf" transform="rotate(0.0 418.8 524.5)"/>
<rect x="721.5" y="415.0" width="13.3" height="21.0" fill="#cfcfcf" transform="rotate(-5.0 728.1 425.5)"/>
<rect x="725.5" y="419.0" width="4.0" height="3.0" fill="#fff" transform="rotate(-5.0 727.5 420.5)"/>
<rect x="725.5" y="424.0" width="4.0" height="3.0" fill="#fff" transform="rotate(-5.0 727.5 425.5)"/>
<rect x="725.5" y="429.0" width="4.0" height="3.0" fill="#fff" transform="rotate(-5.0 727.5 430.5)"/>
<rect x="720.3" y="466.0" width="8.5" height="7.0" fill="#d4d4d4" transform="rotate(-8.0 724.6 469.5)"/>
<rect x="731.0" y="464.9" width="4.8" height="8.8" fill="#d4d4d4" transform="rotate(-8.0 733.4 469.4)"/>
<rect x="736.9" y="474.9" width="5.2" height="9.2" fill="#d4d4d4" transform="rotate(-8.0 739.5 479.5)"/>
<rect x="733.2" y="480.4" width="10.7" height="4.4" fill="#d4d4d4" transform="rotate(-8.0 738.5 482.6)"/>
<rect x="730.6" y="488.5" width="5.9" height="8.1" fill="#d4d4d4" transform="rotate(-8.0 733.6 492.5)"/>
<rect x="726.9" y="494.4" width="10.3" height="4.4" fill="#d4d4d4" transform="rotate(-8.0 732.1 496.6)"/>
<rect x="706.7" y="486.3" width="3.7" height="8.8" fill="#d4d4d4" transform="rotate(-8.0 708.5 490.7)"/>
<rect x="710.0" y="492.2" width="4.4" height="8.1" fill="#d4d4d4" transform="rotate(-8.0 712.2 496.2)"/>
<rect x="714.4" y="485.5" width="4.4" height="8.8" fill="#d4d4d4" transform="rotate(-8.0 716.6 490.0)"/>
<rect x="718.8" y="492.2" width="5.9" height="8.8" fill="#d4d4d4" transform="rotate(-8.0 721.8 496.6)"/>
<rect x="699.7" y="491.4" width="5.2" height="7.4" fill="#d4d4d4" transform="rotate(-8.0 702.3 495.1)"/>
<rect x="722.9" y="467.9" width="3.7" height="3.3" fill="#f4f4f4" transform="rotate(-8.0 724.7 469.5)"/>
<circle cx="454.7" cy="440.7" r="6.5" fill="#818181"/>
<circle cx="487.0" cy="435.6" r="6.5" fill="#818181"/>
<circle cx="402.2" cy="566.8" r="6.5" fill="#818181"/>
<circle cx="446.0" cy="550.0" r="6.5" fill="#818181"/>
<circle cx="519.8" cy="554.8" r="6.5" fill="#818181"/>
<circle cx="556.0" cy="591.0" r="6.5" fill="#818181"/>
<circle cx="657.2" cy="464.3" r="6.5" fill="#818181"/>
<circle cx="672.6" cy="458.6" r="6.5" fill="#818181"/>
<circle cx="759.6" cy="377.7" r="6.5" fill="#818181"/>
<circle cx="776.4" cy="562.6" r="6.5" fill="#818181"/>
<path d="M494.0 434.5 L560.0 422.0 L624.8 408.5 L701.0 392.8 L717.5 390.0" fill="none" stroke="#6a6a6a" stroke-width="0.9" stroke-linecap="butt" stroke-linejoin="round" stroke-dasharray="3.5 2"/>
<path d="M717.5 390 C727 389 735 392 738 409 L742.8 431 L742.8 449 C742.8 456 738 459 733 460 L697.700 470.700 L680 478" fill="none" stroke="#6a6a6a" stroke-width="0.9" stroke-dasharray="3.5 2"/>
<path d="M680 478 C674 484 674 488 676.3 492 C683 505 687.500 520 687.500 535 L695 580 L693.800 645" fill="none" stroke="#6a6a6a" stroke-width="0.9" stroke-dasharray="3.5 2"/>
<path d="M553.0 424.0 L563.0 484.0" fill="none" stroke="#8a8a8a" stroke-width="0.8" stroke-linecap="butt" stroke-linejoin="round" stroke-dasharray="3.5 2"/>
<text x="369.8" y="410.0" font-size="5.8" fill="#2a2a2a" text-anchor="start" font-weight="normal" letter-spacing="0.38" stroke="#2a2a2a" stroke-width="0.10">Fraunhofer-Institut</text>
<text x="369.8" y="417.0" font-size="5.8" fill="#2a2a2a" text-anchor="start" font-weight="normal" letter-spacing="0.38" stroke="#2a2a2a" stroke-width="0.10">für Software- und</text>
<text x="369.8" y="424.2" font-size="5.8" fill="#2a2a2a" text-anchor="start" font-weight="normal" letter-spacing="0.38" stroke="#2a2a2a" stroke-width="0.10">Systemtechnik ISST</text>
<text x="464.0" y="408.3" font-size="5.8" fill="#2a2a2a" text-anchor="start" font-weight="normal" letter-spacing="0.38" stroke="#2a2a2a" stroke-width="0.10">Fraunhofer-Institut</text>
<text x="464.0" y="414.8" font-size="5.8" fill="#2a2a2a" text-anchor="start" font-weight="normal" letter-spacing="0.38" stroke="#2a2a2a" stroke-width="0.10">für Materialfluss</text>
<text x="464.0" y="421.3" font-size="5.8" fill="#2a2a2a" text-anchor="start" font-weight="normal" letter-spacing="0.38" stroke="#2a2a2a" stroke-width="0.10">und Logistik</text>
<text x="432.7" y="427.5" font-size="5.8" fill="#ababab" text-anchor="start" font-weight="normal" letter-spacing="0.38" stroke="#ababab" stroke-width="0.10">Technologie-</text>
<text x="432.7" y="433.2" font-size="5.8" fill="#ababab" text-anchor="start" font-weight="normal" letter-spacing="0.38" stroke="#ababab" stroke-width="0.10">zentrum</text>
<text x="479.7" y="428.0" font-size="5.8" fill="#ababab" text-anchor="start" font-weight="normal" letter-spacing="0.38" stroke="#ababab" stroke-width="0.10">Technologiez.</text>
<text x="464.5" y="453.5" font-size="5.8" fill="#2a2a2a" text-anchor="start" font-weight="normal" letter-spacing="0.38" stroke="#2a2a2a" stroke-width="0.10">Technologie-</text>
<text x="464.5" y="460.5" font-size="5.8" fill="#2a2a2a" text-anchor="start" font-weight="normal" letter-spacing="0.38" stroke="#2a2a2a" stroke-width="0.10">zentrum</text>
<text x="431.0" y="451.0" font-size="5.2" fill="#2a2a2a" text-anchor="start" font-weight="normal" letter-spacing="0.34" stroke="#2a2a2a" stroke-width="0.09">Uiuertnn</text>
<text x="522.3" y="361.3" font-size="5.8" fill="#2a2a2a" text-anchor="middle" font-weight="normal" letter-spacing="0.38" stroke="#2a2a2a" stroke-width="0.10">B1</text>
<text x="331.5" y="477.5" font-size="20.6" fill="#1a1a1a" text-anchor="start" font-weight="normal" letter-spacing="0.00" stroke="#1a1a1a" stroke-width="0.30" textLength="52" lengthAdjust="spacingAndGlyphs">North</text>
<text x="320.0" y="498.9" font-size="20.6" fill="#1a1a1a" text-anchor="start" font-weight="normal" letter-spacing="0.00" stroke="#1a1a1a" stroke-width="0.30" textLength="76" lengthAdjust="spacingAndGlyphs">Campus</text>
<text x="410.0" y="488.0" font-size="5.4" fill="#2a2a2a" text-anchor="start" font-weight="normal" letter-spacing="0.35" stroke="#2a2a2a" stroke-width="0.09" transform="rotate(-87.5 410.0 488.0)">Hauert</text>
<text x="425.5" y="526.0" font-size="5.2" fill="#2a2a2a" text-anchor="start" font-weight="normal" letter-spacing="0.34" stroke="#2a2a2a" stroke-width="0.09" transform="rotate(-86.3 425.5 526.0)">Martin-Schmeißer Weg (MSW)</text>
<text x="449.0" y="537.0" font-size="5.2" fill="#2a2a2a" text-anchor="start" font-weight="normal" letter-spacing="0.34" stroke="#2a2a2a" stroke-width="0.09" transform="rotate(-86.5 449.0 537.0)">Joseph-von-Fraunhofer Straße</text>
<text x="457.0" y="476.0" font-size="4.9" fill="#2a2a2a" text-anchor="start" font-weight="normal" letter-spacing="0.32" stroke="#2a2a2a" stroke-width="0.09" transform="rotate(-12.5 457.0 476.0)">Maria-Goeppert-Mayer-Straße (MGM)</text>
<text x="560.0" y="422.0" font-size="5.4" fill="#2a2a2a" text-anchor="start" font-weight="normal" letter-spacing="0.35" stroke="#2a2a2a" stroke-width="0.09" transform="rotate(-11.0 560.0 422.0)">Emil-Figge-Straße (EF)</text>
<text x="672.0" y="451.3" font-size="5.4" fill="#2a2a2a" text-anchor="start" font-weight="normal" letter-spacing="0.35" stroke="#2a2a2a" stroke-width="0.09" transform="rotate(-103.0 672.0 451.3)">Vogelpothsweg (V)</text>
<text x="566.0" y="483.0" font-size="4.4" fill="#2a2a2a" text-anchor="start" font-weight="normal" letter-spacing="0.29" stroke="#2a2a2a" stroke-width="0.08" transform="rotate(-98.0 566.0 483.0)">Leonhard-Euler-Str.</text>
<text x="548.3" y="544.5" font-size="5.0" fill="#2a2a2a" text-anchor="start" font-weight="normal" letter-spacing="0.33" stroke="#2a2a2a" stroke-width="0.09" transform="rotate(-100.0 548.3 544.5)">Friedrich-Wöhler-Weg</text>
<text x="548.6" y="550.0" font-size="5.6" fill="#2a2a2a" text-anchor="start" font-weight="normal" letter-spacing="0.37" stroke="#2a2a2a" stroke-width="0.10" transform="rotate(-11.0 548.6 550.0)">Otto-Hahn-Straße (OH)</text>
<text x="598.0" y="478.0" font-size="5.4" fill="#2a2a2a" text-anchor="start" font-weight="normal" letter-spacing="0.35" stroke="#2a2a2a" stroke-width="0.09" transform="rotate(-11.8 598.0 478.0)">Martin-Schmeißer</text>
<text x="620.0" y="480.5" font-size="5.4" fill="#2a2a2a" text-anchor="start" font-weight="normal" letter-spacing="0.35" stroke="#2a2a2a" stroke-width="0.09" transform="rotate(-10.0 620.0 480.5)">Platz</text>
<text x="551.6" y="534.2" font-size="5.4" fill="#2a2a2a" text-anchor="start" font-weight="normal" letter-spacing="0.35" stroke="#2a2a2a" stroke-width="0.09">ISAS</text>
<text x="428.6" y="512.5" font-size="5.8" fill="#2a2a2a" text-anchor="start" font-weight="normal" letter-spacing="0.38" stroke="#2a2a2a" stroke-width="0.10">28/A1</text>
<text x="416.0" y="527.0" font-size="5.8" fill="#2a2a2a" text-anchor="start" font-weight="normal" letter-spacing="0.38" stroke="#2a2a2a" stroke-width="0.10">28/A2</text>
<text x="413.7" y="555.0" font-size="5.8" fill="#2a2a2a" text-anchor="start" font-weight="normal" letter-spacing="0.38" stroke="#2a2a2a" stroke-width="0.10">28/A3</text>
<text x="471.6" y="515.5" font-size="5.6" fill="#2a2a2a" text-anchor="start" font-weight="normal" letter-spacing="0.37" stroke="#2a2a2a" stroke-width="0.10">Freige-</text>
<text x="471.6" y="520.5" font-size="5.6" fill="#2a2a2a" text-anchor="start" font-weight="normal" letter-spacing="0.37" stroke="#2a2a2a" stroke-width="0.10">lände MB</text>
<text x="461.8" y="532.8" font-size="5.8" fill="#2a2a2a" text-anchor="start" font-weight="normal" letter-spacing="0.38" stroke="#2a2a2a" stroke-width="0.10">F&amp;E Gesellschaft</text>
<text x="369.7" y="580.5" font-size="5.8" fill="#ababab" text-anchor="start" font-weight="normal" letter-spacing="0.38" stroke="#ababab" stroke-width="0.10">Martin-Schmeißer-Weg</text>
<text x="443.2" y="569.2" font-size="5.8" fill="#ababab" text-anchor="start" font-weight="normal" letter-spacing="0.38" stroke="#ababab" stroke-width="0.10">Joseph-von-</text>
<text x="443.2" y="575.0" font-size="5.8" fill="#ababab" text-anchor="start" font-weight="normal" letter-spacing="0.38" stroke="#ababab" stroke-width="0.10">Fraunhofer</text>
<text x="443.2" y="581.0" font-size="5.8" fill="#ababab" text-anchor="start" font-weight="normal" letter-spacing="0.38" stroke="#ababab" stroke-width="0.10">Straße</text>
<text x="490.2" y="572.4" font-size="5.8" fill="#2a2a2a" text-anchor="start" font-weight="normal" letter-spacing="0.38" stroke="#2a2a2a" stroke-width="0.10">Max-Planck-</text>
<text x="490.2" y="578.0" font-size="5.8" fill="#2a2a2a" text-anchor="start" font-weight="normal" letter-spacing="0.38" stroke="#2a2a2a" stroke-width="0.10">Institut für</text>
<text x="490.2" y="583.5" font-size="5.8" fill="#2a2a2a" text-anchor="start" font-weight="normal" letter-spacing="0.38" stroke="#2a2a2a" stroke-width="0.10">molekulare</text>
<text x="490.2" y="589.0" font-size="5.8" fill="#2a2a2a" text-anchor="start" font-weight="normal" letter-spacing="0.38" stroke="#2a2a2a" stroke-width="0.10">Physiologie</text>
<text x="527.9" y="556.2" font-size="5.8" fill="#ababab" text-anchor="start" font-weight="normal" letter-spacing="0.38" stroke="#ababab" stroke-width="0.10">Meitnerweg</text>
<text x="564.8" y="590.7" font-size="5.8" fill="#ababab" text-anchor="start" font-weight="normal" letter-spacing="0.38" stroke="#ababab" stroke-width="0.10">Meitnerweg/</text>
<text x="564.8" y="596.2" font-size="5.8" fill="#ababab" text-anchor="start" font-weight="normal" letter-spacing="0.38" stroke="#ababab" stroke-width="0.10">Wohnanlage</text>
<text x="544.8" y="632.7" font-size="5.8" fill="#2a2a2a" text-anchor="start" font-weight="normal" letter-spacing="0.38" stroke="#2a2a2a" stroke-width="0.10">Universitätsstraße</text>
<text x="636.6" y="608.0" font-size="5.4" fill="#111" text-anchor="start" font-weight="bold" letter-spacing="0.35" stroke="#111" stroke-width="0.09" transform="rotate(-12.5 636.6 608.0)">Außensportanlagen</text>
<text x="700.8" y="619.0" font-size="5.4" fill="#2a2a2a" text-anchor="start" font-weight="normal" letter-spacing="0.35" stroke="#2a2a2a" stroke-width="0.09" transform="rotate(-89.0 700.8 619.0)">Marie-Curie-Allee</text>
<text x="722.0" y="523.0" font-size="5.4" fill="#2a2a2a" text-anchor="start" font-weight="normal" letter-spacing="0.35" stroke="#2a2a2a" stroke-width="0.09" transform="rotate(51.0 722.0 523.0)">Vogelpothsweg</text>
<text x="779.5" y="541.3" font-size="5.4" fill="#2a2a2a" text-anchor="start" font-weight="normal" letter-spacing="0.35" stroke="#2a2a2a" stroke-width="0.09" transform="rotate(-82.0 779.5 541.3)">Baroper Straße</text>
<text x="763.9" y="553.3" font-size="5.8" fill="#ababab" text-anchor="start" font-weight="normal" letter-spacing="0.38" stroke="#ababab" stroke-width="0.10">Groß Barop</text>
<text x="774.0" y="585.0" font-size="5.4" fill="#2a2a2a" text-anchor="start" font-weight="normal" letter-spacing="0.35" stroke="#2a2a2a" stroke-width="0.09" transform="rotate(24.0 774.0 585.0)">Ostenbergstraße</text>
<text x="711.3" y="586.7" font-size="5.0" fill="#2a2a2a" text-anchor="start" font-weight="normal" letter-spacing="0.33" stroke="#2a2a2a" stroke-width="0.09" transform="rotate(15.0 711.3 586.7)">Hugo-Heimsath-Str.</text>
<text x="752.7" y="369.4" font-size="5.6" fill="#ababab" text-anchor="start" font-weight="normal" letter-spacing="0.37" stroke="#ababab" stroke-width="0.10">mil-Figge-Str.</text>
<text x="716.0" y="449.8" font-size="4.9" fill="#ababab" text-anchor="start" font-weight="normal" letter-spacing="0.33" stroke="#ababab" stroke-width="0.09">Universität</text>
<text x="469.0" y="389.7" font-size="4.7" fill="#d8d8d8" text-anchor="middle" font-weight="normal" letter-spacing="0.31" stroke="#d8d8d8" stroke-width="0.08">27</text>
<text x="511.5" y="380.0" font-size="4.7" fill="#d8d8d8" text-anchor="middle" font-weight="normal" letter-spacing="0.31" stroke="#d8d8d8" stroke-width="0.08">1a</text>
<text x="537.2" y="374.5" font-size="4.7" fill="#d8d8d8" text-anchor="middle" font-weight="normal" letter-spacing="0.31" stroke="#d8d8d8" stroke-width="0.08">1b</text>
<text x="547.6" y="381.0" font-size="4.7" fill="#d8d8d8" text-anchor="middle" font-weight="normal" letter-spacing="0.31" stroke="#d8d8d8" stroke-width="0.08">1c</text>
<text x="541.5" y="411.5" font-size="4.7" fill="#d8d8d8" text-anchor="middle" font-weight="normal" letter-spacing="0.31" stroke="#d8d8d8" stroke-width="0.08">2</text>
<text x="553.0" y="406.0" font-size="4.7" fill="#d8d8d8" text-anchor="middle" font-weight="normal" letter-spacing="0.31" stroke="#d8d8d8" stroke-width="0.08">3</text>
<text x="586.7" y="395.2" font-size="4.7" fill="#d8d8d8" text-anchor="middle" font-weight="normal" letter-spacing="0.31" stroke="#d8d8d8" stroke-width="0.08">4</text>
<text x="622.9" y="388.5" font-size="4.7" fill="#d8d8d8" text-anchor="middle" font-weight="normal" letter-spacing="0.31" stroke="#d8d8d8" stroke-width="0.08">26</text>
<text x="541.7" y="443.5" font-size="4.7" fill="#d8d8d8" text-anchor="middle" font-weight="normal" letter-spacing="0.31" stroke="#d8d8d8" stroke-width="0.08">5</text>
<text x="512.0" y="474.0" font-size="4.7" fill="#d8d8d8" text-anchor="middle" font-weight="normal" letter-spacing="0.31" stroke="#d8d8d8" stroke-width="0.08">10</text>
<text x="545.5" y="476.5" font-size="4.7" fill="#d8d8d8" text-anchor="middle" font-weight="normal" letter-spacing="0.31" stroke="#d8d8d8" stroke-width="0.08">11a</text>
<text x="497.5" y="510.5" font-size="4.7" fill="#d8d8d8" text-anchor="middle" font-weight="normal" letter-spacing="0.31" stroke="#d8d8d8" stroke-width="0.08">25</text>
<text x="532.5" y="515.5" font-size="4.7" fill="#d8d8d8" text-anchor="middle" font-weight="normal" letter-spacing="0.31" stroke="#d8d8d8" stroke-width="0.08">18</text>
<text x="533.0" y="538.0" font-size="4.7" fill="#d8d8d8" text-anchor="middle" font-weight="normal" letter-spacing="0.31" stroke="#d8d8d8" stroke-width="0.08">19</text>
<text x="576.0" y="530.5" font-size="4.7" fill="#d8d8d8" text-anchor="middle" font-weight="normal" letter-spacing="0.31" stroke="#d8d8d8" stroke-width="0.08">20</text>
<text x="594.5" y="522.5" font-size="4.7" fill="#d8d8d8" text-anchor="middle" font-weight="normal" letter-spacing="0.31" stroke="#d8d8d8" stroke-width="0.08">21b</text>
<text x="615.5" y="514.0" font-size="4.7" fill="#d8d8d8" text-anchor="middle" font-weight="normal" letter-spacing="0.31" stroke="#d8d8d8" stroke-width="0.08">21a</text>
<text x="602.0" y="491.5" font-size="4.7" fill="#d8d8d8" text-anchor="middle" font-weight="normal" letter-spacing="0.31" stroke="#d8d8d8" stroke-width="0.08">13</text>
<text x="565.5" y="497.5" font-size="4.7" fill="#d8d8d8" text-anchor="middle" font-weight="normal" letter-spacing="0.31" stroke="#d8d8d8" stroke-width="0.08">12</text>
<text x="654.8" y="479.0" font-size="4.7" fill="#d8d8d8" text-anchor="middle" font-weight="normal" letter-spacing="0.31" stroke="#d8d8d8" stroke-width="0.08">14</text>
<text x="689.0" y="461.5" font-size="4.7" fill="#d8d8d8" text-anchor="middle" font-weight="normal" letter-spacing="0.31" stroke="#d8d8d8" stroke-width="0.08">15</text>
<text x="724.7" y="458.2" font-size="4.7" fill="#d8d8d8" text-anchor="middle" font-weight="normal" letter-spacing="0.31" stroke="#d8d8d8" stroke-width="0.08">16</text>
<text x="659.3" y="515.3" font-size="4.7" fill="#d8d8d8" text-anchor="middle" font-weight="normal" letter-spacing="0.31" stroke="#d8d8d8" stroke-width="0.08">22</text>
<text x="672.0" y="568.0" font-size="4.7" fill="#d8d8d8" text-anchor="middle" font-weight="normal" letter-spacing="0.31" stroke="#d8d8d8" stroke-width="0.08">24</text>
<text x="740.0" y="606.8" font-size="4.7" fill="#d8d8d8" text-anchor="middle" font-weight="normal" letter-spacing="0.31" stroke="#d8d8d8" stroke-width="0.08">47</text>
<text x="435.5" y="563.8" font-size="4.7" fill="#d8d8d8" text-anchor="middle" font-weight="normal" letter-spacing="0.31" stroke="#d8d8d8" stroke-width="0.08">17a</text>
<text x="458.2" y="560.5" font-size="4.7" fill="#d8d8d8" text-anchor="middle" font-weight="normal" letter-spacing="0.31" stroke="#d8d8d8" stroke-width="0.08">17b</text>
<text x="482.0" y="556.0" font-size="4.7" fill="#d8d8d8" text-anchor="middle" font-weight="normal" letter-spacing="0.31" stroke="#d8d8d8" stroke-width="0.08">17c</text>
<text x="595.0" y="443.5" font-size="4.7" fill="#d8d8d8" text-anchor="middle" font-weight="normal" letter-spacing="0.31" stroke="#d8d8d8" stroke-width="0.08">6</text>
<text x="584.6" y="445.5" font-size="4.7" fill="#d8d8d8" text-anchor="middle" font-weight="normal" letter-spacing="0.31" stroke="#d8d8d8" stroke-width="0.08">6a</text>
<text x="700.0" y="403.5" font-size="4.7" fill="#d8d8d8" text-anchor="middle" font-weight="normal" letter-spacing="0.31" stroke="#d8d8d8" stroke-width="0.08">8</text>
<text x="562.5" y="447.5" font-size="4.7" fill="#d8d8d8" text-anchor="middle" font-weight="normal" letter-spacing="0.31" stroke="#d8d8d8" stroke-width="0.08">17a</text>
<text x="522.8" y="415.0" font-size="4.7" fill="#e8e8e8" text-anchor="middle" font-weight="normal" letter-spacing="0.31" stroke="#e8e8e8" stroke-width="0.08">P</text>
<text x="515.3" y="449.0" font-size="4.7" fill="#e8e8e8" text-anchor="middle" font-weight="normal" letter-spacing="0.31" stroke="#e8e8e8" stroke-width="0.08">P</text>
<text x="567.0" y="433.0" font-size="4.7" fill="#e8e8e8" text-anchor="middle" font-weight="normal" letter-spacing="0.31" stroke="#e8e8e8" stroke-width="0.08">P</text>
<text x="616.3" y="420.0" font-size="4.7" fill="#e8e8e8" text-anchor="middle" font-weight="normal" letter-spacing="0.31" stroke="#e8e8e8" stroke-width="0.08">P</text>
<text x="643.8" y="449.0" font-size="4.7" fill="#e8e8e8" text-anchor="middle" font-weight="normal" letter-spacing="0.31" stroke="#e8e8e8" stroke-width="0.08">P</text>
<text x="594.0" y="563.5" font-size="4.7" fill="#e8e8e8" text-anchor="middle" font-weight="normal" letter-spacing="0.31" stroke="#e8e8e8" stroke-width="0.08">P</text>
<text x="709.5" y="478.5" font-size="4.7" fill="#e8e8e8" text-anchor="middle" font-weight="normal" letter-spacing="0.31" stroke="#e8e8e8" stroke-width="0.08">P</text>
</g>
<g style="filter:blur(0.3px)">
<g transform="rotate(-12.60 698.2 359.2)">
<rect x="646.6" y="339.1" width="103.2" height="40.2" rx="4.5" fill="#f03e3e" fill-opacity="0.94" stroke="#ff1818" stroke-width="1.8"/>
<rect x="647.5" y="340.0" width="13.5" height="38.4" rx="3" fill="#ff5c5c" fill-opacity="0.8"/>
<rect x="732.9" y="340.0" width="16" height="38.4" rx="3" fill="#ff5c5c" fill-opacity="0.8"/>
<rect x="689.1" y="344.1" width="11.5" height="18.5" fill="#4b4b50"/>
<text x="660.2" y="376.6" font-size="15.5" fill="#1a0505" textLength="88.5" lengthAdjust="spacingAndGlyphs" stroke="#1a0505" stroke-width="0.6">24 - Main Entrance</text>
</g>
<polygon points="593.9,382.2 601.6,381.2 606.3,404.3 598.2,405.6" fill="#f28210" stroke="#a8561a" stroke-width="1.1" stroke-linejoin="round"/>
<circle cx="708.6" cy="451.6" r="7.3" fill="#f07c12" stroke="#cc4a12" stroke-width="1"/>
<text x="601" y="375.600" font-size="10.5" fill="#1a1a1a" textLength="15.500" lengthAdjust="spacingAndGlyphs">IBZ</text>
<text x="721.5" y="442.800" font-size="11.5" fill="#1a1a1a" textLength="79.500" lengthAdjust="spacingAndGlyphs">train station (S1)</text>
</g>
</svg>
<!--/MAP-->
</div>

<div class="abs" style="left:4px;top:290px;width:1015px;height:3px;background:#f8f9fc"></div>
<div class="abs" style="left:504px;top:290px;width:16px;height:3px;background:#bcc2f0;border-radius:1px"></div>
<div class="abs" style="left:248px;top:294px;width:4px;height:378px;background:#f7f8fc"></div>
<div class="abs" style="left:916px;top:294px;width:4px;height:378px;background:#f7f8fc"></div>
<div class="abs" style="left:248.500px;top:472px;width:3px;height:16px;background:#c6cbf0;border-radius:1px"></div>
<div class="abs" style="left:916.500px;top:472px;width:3px;height:16px;background:#c6cbf0;border-radius:1px"></div>

<div class="abs" style="left:271px;top:328.300px;width:9px;height:8.500px;background:#474747;border-radius:1.500px;filter:blur(0.3px)"><div class="abs" style="left:1.800px;top:3.700px;width:5.400px;height:1.200px;background:#c4c4c4"></div><div class="abs" style="left:3.900px;top:1.500px;width:1.200px;height:5.500px;background:#c4c4c4"></div></div>
<div class="abs" style="left:261.300px;top:340.200px;width:28px;height:9.300px;background:#474747;border-radius:2.500px;color:#cdcdcd;font-size:7.200px;font-weight:bold;text-align:center;line-height:9.600px;letter-spacing:-0.100px;filter:blur(0.3px)">RESET</div>
<div class="abs" style="left:271px;top:353px;width:9px;height:8.300px;background:#474747;border-radius:1.500px;filter:blur(0.3px)"><div class="abs" style="left:1.800px;top:3.500px;width:5.400px;height:1.300px;background:#c4c4c4"></div></div>
<!--OVERLAY-->
<!--PANELS-->
</body></html>
